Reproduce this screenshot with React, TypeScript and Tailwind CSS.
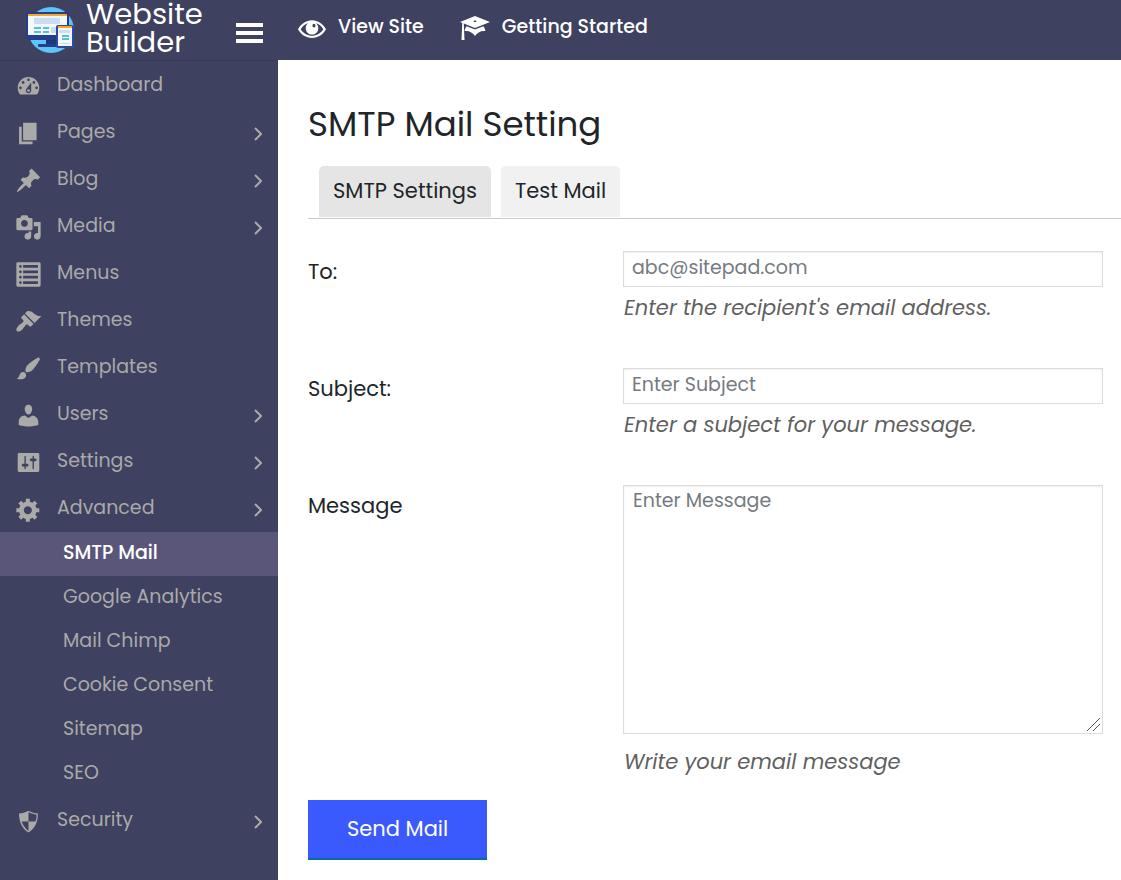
import { useState } from 'react';
import type { ReactNode } from 'react';

const icons = {
  dashboard:
    'M3.76 16h12.48c1.1-1.37 1.76-3.11 1.76-5 0-4.42-3.58-8-8-8s-8 3.58-8 8c0 1.89.66 3.63 1.76 5zM10 4c.55 0 1 .45 1 1s-.45 1-1 1-1-.45-1-1 .45-1 1-1zM6 6c.55 0 1 .45 1 1s-.45 1-1 1-1-.45-1-1 .45-1 1-1zm8 0c.55 0 1 .45 1 1s-.45 1-1 1-1-.45-1-1 .45-1 1-1zm-5.37 5.55L12 7v6c0 1.1-.9 2-2 2s-2-.9-2-2c0-.57.24-1.08.63-1.45zM4 10c.55 0 1 .45 1 1s-.45 1-1 1-1-.45-1-1 .45-1 1-1zm12 0c.55 0 1 .45 1 1s-.45 1-1 1-1-.45-1-1 .45-1 1-1zm-5 3c0-.55-.45-1-1-1s-1 .45-1 1 .45 1 1 1 1-.45 1-1z',
  pages: 'M6 15V2h10v13H6zm-1 1h8v2H3V5h2v11z',
  pin: 'M10.44 3.02l1.82-1.82 6.36 6.35-1.83 1.82c-1.05-.68-2.48-.57-3.41.36l-.75.75c-.92.93-1.04 2.35-.35 3.41l-1.83 1.82-2.41-2.41-2.8 2.79c-.42.42-3.38 2.71-3.8 2.29s1.86-3.39 2.28-3.81l2.79-2.79L4.1 9.36l1.83-1.82c1.05.69 2.48.57 3.4-.36l.75-.75c.93-.92 1.05-2.35.36-3.41z',
  media:
    'M13 11V4c0-.55-.45-1-1-1h-1.67L9 1H5L3.67 3H2c-.55 0-1 .45-1 1v7c0 .55.45 1 1 1h10c.55 0 1-.45 1-1zM7 4.5c1.38 0 2.5 1.12 2.5 2.5S8.38 9.5 7 9.5 4.5 8.38 4.5 7 5.62 4.5 7 4.5zM14 6h5v10.5c0 1.38-1.12 2.5-2.5 2.5S14 17.88 14 16.5s1.12-2.5 2.5-2.5c.17 0 .34.02.5.05V9h-3V6zm-4 8.05V13h2v3.5c0 1.38-1.12 2.5-2.5 2.5S7 17.88 7 16.5 8.12 14 9.5 14c.17 0 .34.02.5.05z',
  list: 'M2 19h16c.55 0 1-.45 1-1V2c0-.55-.45-1-1-1H2c-.55 0-1 .45-1 1v16c0 .55.45 1 1 1zM4 3a1 1 0 110 2 1 1 0 010-2zm13 0v2H6V3h11zM4 7a1 1 0 110 2 1 1 0 010-2zm13 0v2H6V7h11zM4 11a1 1 0 110 2 1 1 0 010-2zm13 0v2H6v-2h11zM4 15a1 1 0 110 2 1 1 0 010-2zm13 0v2H6v-2h11z',
  themes:
    'M14.48 11.06L7.41 3.99l1.5-1.5c.5-.56 2.3-.47 3.51.32 1.21.8 1.43 1.28 2.91 2.1 1.18.64 2.45 1.26 4.45.85zm-.71.71L6.7 4.7 4.93 6.47c-.39.39-.39 1.02 0 1.41l1.06 1.06c.39.39.39 1.03 0 1.42-.6.6-1.43 1.11-2.21 1.69-.35.26-.7.53-1.01.84C1.43 14.23.4 16.08 1.4 17.07c.99 1 2.84-.03 4.18-1.36.31-.31.58-.66.85-1.02.57-.78 1.08-1.61 1.69-2.21.39-.39 1.02-.39 1.41 0l1.06 1.06c.39.39 1.02.39 1.41 0z',
  brush:
    'M18.33 3.57s.27-.8-.31-1.36c-.53-.52-1.22-.24-1.22-.24-.61.3-5.76 3.47-7.67 5.57-.86.96-2.06 3.79-1.09 4.82.92.98 3.96-.17 4.79-1 2.06-2.06 5.21-7.17 5.5-7.79zM1.4 17.65c2.37-1.56 1.46-3.41 3.23-4.64.93-.65 2.22-.62 3.08.29.63.67.8 2.57-.16 3.46-1.57 1.45-4 1.55-6.15.89z',
  user: 'M10 9.25c-2.27 0-2.73-3.44-2.73-3.44C7 4.02 7.82 2 9.97 2c2.16 0 2.98 2.02 2.71 3.81 0 0-.41 3.44-2.68 3.44zm0 2.57L12.72 10c2.39 0 4.52 2.33 4.52 4.53v2.49s-3.65 1.13-7.24 1.13c-3.65 0-7.24-1.13-7.24-1.13v-2.49c0-2.25 1.94-4.48 4.47-4.48z',
  sliders:
    'M18 16V4c0-.55-.45-1-1-1H3c-.55 0-1 .45-1 1v12c0 .55.45 1 1 1h14c.55 0 1-.45 1-1zM8 11h1c.55 0 1 .45 1 1s-.45 1-1 1H8v1.5c0 .28-.22.5-.5.5s-.5-.22-.5-.5V13H6c-.55 0-1-.45-1-1s.45-1 1-1h1V5.5c0-.28.22-.5.5-.5s.5.22.5.5V11zm5-2h-1c-.55 0-1-.45-1-1s.45-1 1-1h1V5.5c0-.28.22-.5.5-.5s.5.22.5.5V7h1c.55 0 1 .45 1 1s-.45 1-1 1h-1v5.5c0 .28-.22.5-.5.5s-.5-.22-.5-.5V9z',
  gear: 'M18 12h-2.18c-.17.7-.44 1.35-.81 1.93l1.54 1.54-2.1 2.1-1.54-1.54c-.58.36-1.23.63-1.91.79V19H8v-2.18c-.68-.16-1.33-.43-1.91-.79l-1.54 1.54-2.12-2.12 1.54-1.54c-.36-.58-.63-1.23-.79-1.91H1V9.03h2.17c.16-.7.44-1.35.8-1.94L2.43 5.55l2.1-2.1 1.54 1.54c.58-.37 1.24-.64 1.93-.81V2h3v2.18c.68.16 1.33.43 1.91.79l1.54-1.54 2.12 2.12-1.54 1.54c.36.59.64 1.24.8 1.94H18V12zm-8.5 1.5c1.66 0 3-1.34 3-3s-1.34-3-3-3-3 1.34-3 3 1.34 3 3 3z',
  shield: 'M10 2s3 2 7 2c0 11-7 14-7 14S3 15 3 4c4 0 7-2 7-2zm0 8h5s1-1 1-5c0 0-5-1-6-2v7H5c1 4 5 7 5 7v-7z',
  eye: 'M0 10.2C2.2 6.3 5.8 3.8 10 3.8s7.8 2.5 10 6.4c-2.2 3.9-5.8 6.2-10 6.2S2.2 14.1 0 10.2zm1.9 0c1.9 2.9 4.8 4.7 8.1 4.7s6.2-1.8 8.1-4.7C16.7 7.9 14.9 6.3 12.7 5.7c1.1.8 1.8 2.1 1.8 3.7 0 2.6-2 4.6-4.5 4.600S5.500 12 5.500 9.400c0-1.600.7-2.900 1.800-3.700C5.100 6.300 3.300 7.900 1.900 10.200zM11.400 6.300a1.100 1.300 0 100 2.600 1.100 1.300 0 000-2.600z',
  cap: 'M10 10L2.54 7.02 3 18H1l.48-11.41L0 6l10-4 10 4zm0-5c-.55 0-1 .22-1 .5s.45.5 1 .5 1-.22 1-.5-.45-.5-1-.5zm0 6l5.57-2.23c.71.94 1.2 2.07 1.36 3.3-.3-.04-.61-.07-.93-.07-2.55 0-4.78 1.37-6 3.41C8.78 13.37 6.55 12 4 12c-.32 0-.63.03-.93.07.16-1.23.65-2.36 1.36-3.3z',
};

type IconName = keyof typeof icons;

type MenuItem = {
  label: string;
  icon: IconName;
  arrow?: boolean;
  children?: string[];
};

const menu: MenuItem[] = [
  { label: 'Dashboard', icon: 'dashboard' },
  { label: 'Pages', icon: 'pages', arrow: true },
  { label: 'Blog', icon: 'pin', arrow: true },
  { label: 'Media', icon: 'media', arrow: true },
  { label: 'Menus', icon: 'list' },
  { label: 'Themes', icon: 'themes' },
  { label: 'Templates', icon: 'brush' },
  { label: 'Users', icon: 'user', arrow: true },
  { label: 'Settings', icon: 'sliders', arrow: true },
  {
    label: 'Advanced',
    icon: 'gear',
    arrow: true,
    children: ['SMTP Mail', 'Google Analytics', 'Mail Chimp', 'Cookie Consent', 'Sitemap', 'SEO'],
  },
  { label: 'Security', icon: 'shield', arrow: true },
];

function Icon({ name, className }: { name: IconName; className: string }) {
  return (
    <svg viewBox="0 0 20 20" fill="currentColor" fillRule="evenodd" className={className} aria-hidden="true">
      <path d={icons[name]} />
    </svg>
  );
}

function Logo() {
  return (
    <svg viewBox="0 0 50 50" className="mt-1 size-[50px] shrink-0" aria-hidden="true">
      <circle cx="25" cy="26" r="23" fill="#5ec5f7" />
      <path d="M20 35h11v6H20z" fill="#1b3780" />
      <rect x="12" y="40" width="26" height="3" rx="1" fill="#243f8c" />
      <rect x="0" y="8" width="43" height="28" rx="2" fill="#243f8c" />
      <path d="M2 10h39v21H2z" fill="#f4f7fd" />
      <path d="M2 10h39v2H2z" fill="#f9a825" />
      <path d="M8 14h26v6H8z" fill="#ccdcf3" />
      <path d="M8 23h7v2H8zM17 23h6v2h-6zM8 27h7v2H8zM17 27h6v2h-6z" fill="#4fc3d0" />
      <path d="M25 23h5v6h-5z" fill="#ccdcf3" />
      <rect x="30" y="21" width="18" height="23" rx="2" fill="#2b4ba0" />
      <path d="M32 23h14v19H32z" fill="#f4f7fd" />
      <path d="M32 22h14v2H32z" fill="#f9a825" />
      <path d="M33 26h11v3H33zM34 39h10v1H34z" fill="#ccdcf3" />
      <path d="M36 31h7v2h-7zM36 34h7v2h-7z" fill="#4fc3d0" />
    </svg>
  );
}

function Sidebar() {
  return (
    <aside className="flex w-[278px] shrink-0 flex-col bg-[#3e415f] text-[#aaaaa9]">
      <div className="flex h-[61px] items-start border-b border-[#36385a] pl-[26px] text-white">
        <Logo />
        <span className="ml-2.5 w-[150px] text-[29px] leading-7">Website Builder</span>
        <button type="button" aria-label="Toggle menu" className="mt-[23px]">
          <svg viewBox="0 0 27 20" fill="currentColor" className="h-5 w-[27px]" aria-hidden="true">
            <path d="M0 0h27v4H0zM0 8h27v4H0zM0 16h27v4H0z" />
          </svg>
        </button>
      </div>

      <nav>
        <ul>
          {menu.map((item) => (
            <li key={item.label}>
              <a href="#" className="flex h-[47px] items-center pr-4 pl-[15px] text-[19px]">
                <Icon name={item.icon} className="mt-1 mr-[15px] size-[27px]" />
                <span className="pt-0.5">{item.label}</span>
                {item.arrow && (
                  <svg viewBox="0 0 8 14" fill="none" stroke="currentColor" strokeWidth="2" className="mt-1 ml-auto h-3.5 w-2" aria-hidden="true">
                    <path d="M1 1l6 6-6 6" />
                  </svg>
                )}
              </a>
              {item.children && (
                <ul className="pt-px">
                  {item.children.map((child, i) => (
                    <li key={child}>
                      <a
                        href="#"
                        className={`flex h-11 items-center pb-0.5 pl-[63px] text-[19px] ${
                          i === 0 ? 'bg-[#5a5679] font-medium text-white' : ''
                        }`}
                      >
                        {child}
                      </a>
                    </li>
                  ))}
                </ul>
              )}
            </li>
          ))}
        </ul>
      </nav>
    </aside>
  );
}

function Field({ id, label, hint, children }: { id: string; label: string; hint: string; children: ReactNode }) {
  return (
    <div className="grid grid-cols-[315px_1fr] pr-[18px]">
      <label htmlFor={id} className="pt-[7px] text-[21px] leading-7 text-[#212529]">
        {label}
      </label>
      <div>
        {children}
        <p className="pt-[7px] pl-px text-[21px] leading-7 text-[#606060] italic">{hint}</p>
      </div>
    </div>
  );
}

const inputClass =
  'block w-full border border-[#dcdcdc] bg-white text-[19px] text-[#32373c] shadow-[inset_0_1px_2px_rgba(0,0,0,0.07)] placeholder:text-[#757a80]';

export default function App() {
  const [tab, setTab] = useState('SMTP Settings');

  return (
    <div className="flex min-h-screen bg-white font-[Poppins,Inter,sans-serif]">
      <Sidebar />

      <div className="flex min-w-0 flex-1 flex-col">
        {/* Top bar */}
        <header className="flex h-[60px] items-start gap-9 bg-[#3e415f] pt-[11px] pl-5 text-[19px] font-medium text-white">
          <a href="#" className="flex items-center gap-3">
            <Icon name="eye" className="mt-1 size-7" />
            View Site
          </a>
          <a href="#" className="flex items-center gap-3">
            <Icon name="cap" className="mt-0.5 size-[30px]" />
            Getting Started
          </a>
        </header>

        <main className="pl-[30px]">
          <h1 className="pt-10 text-[34px] leading-12 text-[#212529]">SMTP Mail Setting</h1>

          {/* Tabs */}
          <div role="tablist" className="mt-[18px] flex gap-2.5 border-b border-[#ccc] pb-px pl-[11px]">
            {['SMTP Settings', 'Test Mail'].map((name) => (
              <button
                key={name}
                type="button"
                role="tab"
                aria-selected={tab === name}
                onClick={() => setTab(name)}
                className={`h-[51px] rounded-t-[5px] px-3.5 pb-0.5 text-[21px] text-[#212529] ${
                  tab === name ? 'bg-[#e5e5e5]' : 'bg-[#f1f1f1]'
                }`}
              >
                {name}
              </button>
            ))}
          </div>

          <form className="pt-8" onSubmit={(e) => e.preventDefault()}>
            <div className="flex flex-col gap-[46px]">
              <Field id="to" label="To:" hint="Enter the recipient's email address.">
                <input id="to" type="email" placeholder="abc@sitepad.com" className={`${inputClass} h-9 px-2 pb-1`} />
              </Field>
              <Field id="subject" label="Subject:" hint="Enter a subject for your message.">
                <input id="subject" type="text" placeholder="Enter Subject" className={`${inputClass} h-9 px-2 pb-1`} />
              </Field>
              <Field id="message" label="Message" hint="Write your email message">
                <div className="relative mb-[7px]">
                  <textarea
                    id="message"
                    placeholder="Enter Message"
                    className={`${inputClass} h-[249px] px-[9px] pt-px [&::-webkit-resizer]:bg-transparent`}
                  />
                  <svg
                    viewBox="0 0 14 14"
                    fill="none"
                    stroke="#555"
                    className="pointer-events-none absolute right-0.5 bottom-0.5 size-3.5"
                    aria-hidden="true"
                  >
                    <path d="M0 13L13 0M6 13l7-7" />
                  </svg>
                </div>
              </Field>
            </div>

            <button
              type="submit"
              className="mt-6 mb-5 h-[60px] border-b-2 border-[#0a6aa8] bg-[#3b5afe] px-[39px] text-[21px] text-white"
            >
              Send Mail
            </button>
          </form>
        </main>
      </div>
    </div>
  );
}
